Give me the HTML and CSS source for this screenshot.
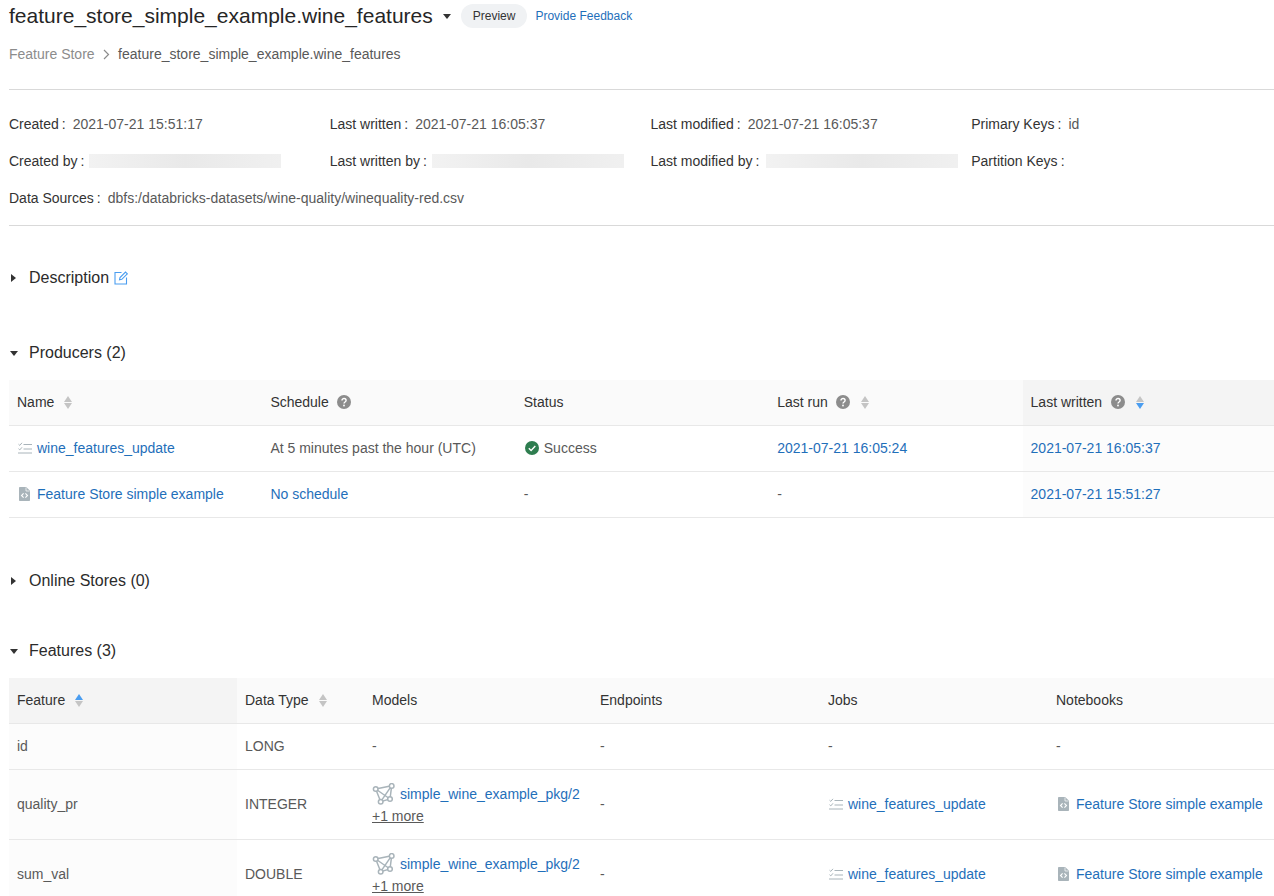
FILE: index.html
```html
<!DOCTYPE html>
<html lang="en">
<head>
<meta charset="utf-8">
<title>feature_store_simple_example.wine_features</title>
<link rel="stylesheet" href="styles.css">
</head>
<body>
<svg class="defs" width="0" height="0" aria-hidden="true">
  <symbol id="job" viewBox="0 0 14 12">
    <path d="M0.500 2.200 1.800 3.400 4 0.800M0.500 6.700 1.800 7.900 4 5.300" fill="none" stroke="#a9b4ba" stroke-width="1"/>
    <path d="M5.500 2.500H14M5.500 7H14M0 11H14" fill="none" stroke="#a9b4ba" stroke-width="1"/>
  </symbol>
  <symbol id="nb" viewBox="0 0 11 14">
    <path d="M0.800 0H7.200L11 3.800V13.200Q11 14 10.200 14H0.800Q0 14 0 13.200V0.800Q0 0 0.800 0Z" fill="#a9b4ba"/>
    <path d="M7 0.500V4H10.500" fill="none" stroke="#fff" stroke-width="0.700"/>
    <path d="M4.600 6.300 2.500 8.500 4.600 10.700M6.400 6.300 8.500 8.500 6.400 10.700" fill="none" stroke="#fff" stroke-width="1.100"/>
  </symbol>
  <symbol id="model" viewBox="0 0 24 23">
    <g fill="none" stroke="#a9b4ba" stroke-width="1.500">
      <path d="M3.700 6 19.700 2.700 18 16 8.700 18.700ZM3.700 6 18 16M19.700 2.700 8.700 18.700"/>
      <g fill="#fff">
        <circle cx="3.700" cy="6" r="2.300"/><circle cx="19.700" cy="2.900" r="2.300"/><circle cx="18" cy="16" r="2.300"/><circle cx="8.700" cy="18.700" r="2.300"/>
      </g>
    </g>
  </symbol>
  <symbol id="help" viewBox="0 0 14 14">
    <circle cx="7" cy="7" r="7" fill="#8c8c8c"/>
    <path d="M5 5.400C5 2.800 9.100 3 9.100 5.400 9.100 7 7 6.900 7 8.500" fill="none" stroke="#fff" stroke-width="1.400"/>
    <circle cx="7" cy="10.500" r="0.900" fill="#fff"/>
  </symbol>
</svg>

<header class="title-row">
  <h1 class="title">feature_store_simple_example.wine_features</h1>
  <span class="caret-down title-caret"></span>
  <span class="pill">Preview</span>
  <a class="feedback">Provide Feedback</a>
</header>

<nav class="crumbs">
  <span class="crumb-root">Feature Store</span>
  <svg class="crumb-sep" width="7" height="11" viewBox="0 0 7 11"><path d="M1 1 5.500 5.500 1 10" fill="none" stroke="#8c8c8c" stroke-width="1.200"/></svg>
  <span class="crumb-current">feature_store_simple_example.wine_features</span>
</nav>

<section class="meta">
  <div class="meta-grid">
    <div class="meta-item"><span class="k">Created</span><span class="v">2021-07-21 15:51:17</span></div>
    <div class="meta-item"><span class="k">Last written</span><span class="v">2021-07-21 16:05:37</span></div>
    <div class="meta-item"><span class="k">Last modified</span><span class="v">2021-07-21 16:05:37</span></div>
    <div class="meta-item"><span class="k">Primary Keys</span><span class="v">id</span></div>
    <div class="meta-item"><span class="k">Created by</span><span class="redact"></span></div>
    <div class="meta-item"><span class="k">Last written by</span><span class="redact"></span></div>
    <div class="meta-item"><span class="k">Last modified by</span><span class="redact redact-wide"></span></div>
    <div class="meta-item"><span class="k">Partition Keys</span></div>
    <div class="meta-item meta-wide"><span class="k">Data Sources</span><span class="v">dbfs:/databricks-datasets/wine-quality/winequality-red.csv</span></div>
  </div>
</section>

<section class="sec sec-desc">
  <h2 class="sec-head"><span class="caret-right"></span>Description
    <svg class="edit" width="14" height="14" viewBox="0 0 14 14"><path d="M7.500 1.500H1V13H12.500V6.500" fill="none" stroke="#4a9df0" stroke-width="1.100"/><path d="M5.500 8.800 6 6.500 11.500 1 13.300 2.800 7.800 8.300Z" fill="none" stroke="#4a9df0" stroke-width="1.100"/></svg>
  </h2>
</section>

<section class="sec sec-prod">
  <h2 class="sec-head"><span class="caret-down"></span>Producers (2)</h2>
  <div class="table producers">
    <div class="cell th"><span>Name</span><span class="sort"><i class="up"></i><i class="dn"></i></span></div>
    <div class="cell th"><span>Schedule</span><svg class="help"><use href="#help"/></svg></div>
    <div class="cell th"><span>Status</span></div>
    <div class="cell th"><span>Last run</span><svg class="help"><use href="#help"/></svg><span class="sort"><i class="up"></i><i class="dn"></i></span></div>
    <div class="cell th sorted"><span>Last written</span><svg class="help"><use href="#help"/></svg><span class="sort"><i class="up"></i><i class="dn on"></i></span></div>

    <div class="cell"><svg class="ic-job"><use href="#job"/></svg><a>wine_features_update</a></div>
    <div class="cell">At 5 minutes past the hour (UTC)</div>
    <div class="cell"><svg class="ok" width="14" height="14" viewBox="0 0 14 14"><circle cx="7" cy="7" r="7" fill="#2e7d4f"/><path d="M3.800 7.200 6.100 9.400 10.300 5" fill="none" stroke="#fff" stroke-width="1.400"/></svg>Success</div>
    <div class="cell"><a>2021-07-21 16:05:24</a></div>
    <div class="cell tint"><a>2021-07-21 16:05:37</a></div>

    <div class="cell"><svg class="ic-nb"><use href="#nb"/></svg><a>Feature Store simple example</a></div>
    <div class="cell"><a>No schedule</a></div>
    <div class="cell">-</div>
    <div class="cell">-</div>
    <div class="cell tint"><a>2021-07-21 15:51:27</a></div>
  </div>
</section>

<section class="sec sec-online">
  <h2 class="sec-head"><span class="caret-right"></span>Online Stores (0)</h2>
</section>

<section class="sec sec-feat">
  <h2 class="sec-head"><span class="caret-down"></span>Features (3)</h2>
  <div class="table features">
    <div class="cell th sorted"><span>Feature</span><span class="sort"><i class="up on"></i><i class="dn"></i></span></div>
    <div class="cell th"><span>Data Type</span><span class="sort"><i class="up"></i><i class="dn"></i></span></div>
    <div class="cell th"><span>Models</span></div>
    <div class="cell th"><span>Endpoints</span></div>
    <div class="cell th"><span>Jobs</span></div>
    <div class="cell th"><span>Notebooks</span></div>

    <div class="cell tint">id</div>
    <div class="cell">LONG</div>
    <div class="cell">-</div>
    <div class="cell">-</div>
    <div class="cell">-</div>
    <div class="cell">-</div>

    <div class="cell tint tall">quality_pr</div>
    <div class="cell tall">INTEGER</div>
    <div class="cell tall models"><div class="model-line"><svg class="ic-model"><use href="#model"/></svg><a>simple_wine_example_pkg/2</a></div><u class="more">+1 more</u></div>
    <div class="cell tall">-</div>
    <div class="cell tall"><svg class="ic-job"><use href="#job"/></svg><a>wine_features_update</a></div>
    <div class="cell tall"><svg class="ic-nb"><use href="#nb"/></svg><a>Feature Store simple example</a></div>

    <div class="cell tint tall">sum_val</div>
    <div class="cell tall">DOUBLE</div>
    <div class="cell tall models"><div class="model-line"><svg class="ic-model"><use href="#model"/></svg><a>simple_wine_example_pkg/2</a></div><u class="more">+1 more</u></div>
    <div class="cell tall">-</div>
    <div class="cell tall"><svg class="ic-job"><use href="#job"/></svg><a>wine_features_update</a></div>
    <div class="cell tall"><svg class="ic-nb"><use href="#nb"/></svg><a>Feature Store simple example</a></div>
  </div>
</section>
</body>
</html>
```
FILE: styles.css
```css
* { box-sizing: border-box; }
html, body { height: 896px; overflow: hidden; }
body {
  margin: 0;
  padding: 0 0 0 9px;
  background: #fff;
  color: #595959;
  font: 14px/20px "Liberation Sans", Arial, sans-serif;
}
.defs { position: absolute; }
a { color: #1f6fba; text-decoration: none; }

.title-row { display: flex; align-items: center; height: 32px; }
.title { margin: 0; font-size: 21px; line-height: 32px; font-weight: 400; color: #262626; }
.title-caret { margin: 0 0 0 10px; }
.pill {
  margin-left: 10px; height: 24px; padding: 0 12px; border-radius: 12px;
  background: #f0f2f4; color: #333; font-size: 12px; line-height: 24px;
}
.feedback { margin-left: 8px; font-size: 12px; }

.caret-down, .caret-right { display: inline-block; width: 0; height: 0; border-style: solid; border-color: transparent; }
.caret-down { border-width: 5px 4px 0; border-top-color: #333; }
.caret-right { border-width: 4px 0 4px 5px; border-left-color: #333; }

.crumbs { display: flex; align-items: center; height: 20px; margin-top: 12px; }
.crumb-root { color: #8c8c8c; }
.crumb-sep { margin: 0 8.5px 0 8px; }

.meta { margin-top: 25px; padding: 15px 0; border-top: 1px solid #d9d9d9; border-bottom: 1px solid #d9d9d9; height: 137px; }
.meta-grid { display: grid; grid-template-columns: repeat(4, 320.75px); grid-auto-rows: 37px; }
.meta-item { display: flex; align-items: center; height: 37px; white-space: nowrap; }
.meta-wide { grid-column: 1 / -1; }
.k { color: #333; margin-right: 7px; }
.k::after { content: ":"; margin-left: 3px; }
.redact {
  display: block; width: 192px; height: 14px; margin-left: -2px;
  background: linear-gradient(90deg, #f2f2f2, #e9e9e9 50%, #f0f0f0);
  filter: blur(.6px);
}
.redact-wide { margin-left: 0; }

.sec-head { display: flex; align-items: center; margin: 0; height: 24px; font-size: 16px; line-height: 24px; font-weight: 400; color: #2b2b2b; }
.sec-head .caret-right { margin: 0 13px 0 2px; }
.sec-head .caret-down { margin: 0 11px 0 1px; }
.edit { margin-left: 5px; }
.sec-desc { margin-top: 40px; }
.sec-prod { margin-top: 51px; }
.sec-online { margin-top: 51px; }
.sec-feat { margin-top: 46px; }
.table { display: grid; margin-top: 15px; }
.producers { grid-template-columns: repeat(4, 253.4px) 251.4px; grid-auto-rows: 46px; }
.features { grid-template-columns: 228px 127px 228px 228px 228px 226px; grid-template-rows: 46px 46px 70px 70px; }
.cell {
  display: flex; align-items: center; padding: 0 8px 2px;
  border-bottom: 1px solid #e8e8e8; white-space: nowrap;
}
.th { background: #fafafa; color: #333; }
.th.sorted { background: #f4f4f4; }
.tint { background: #fcfcfc; }
.sort { display: inline-flex; flex-direction: column; gap: 1px; margin: 2px 0 0 10px; }
.sort i { display: block; width: 0; height: 0; border-style: solid; border-color: transparent; }
.sort .up { border-width: 0 4px 6px; border-bottom-color: #c4c4c4; }
.sort .dn { border-width: 6px 4px 0; border-top-color: #c4c4c4; }
.sort .up.on { border-bottom-color: #4a9df0; }
.sort .dn.on { border-top-color: #4a9df0; }
.help { width: 14px; height: 14px; margin-left: 8.5px; }
.help + .sort { margin-left: 11px; }
.ok { margin: 0 5px 0 1px; }
.ic-job { width: 14px; height: 12px; margin: 0 5px 0 1px; }
.ic-nb { width: 11px; height: 14px; margin: 0 7px 0 2px; }
.ic-model { width: 24px; height: 23px; margin-right: 4px; flex: none; }
.models { flex-direction: column; align-items: flex-start; justify-content: flex-start; padding-top: 12px; }
.model-line { display: flex; align-items: center; height: 24px; }
.more { line-height: 20px; color: #595959; }
```
